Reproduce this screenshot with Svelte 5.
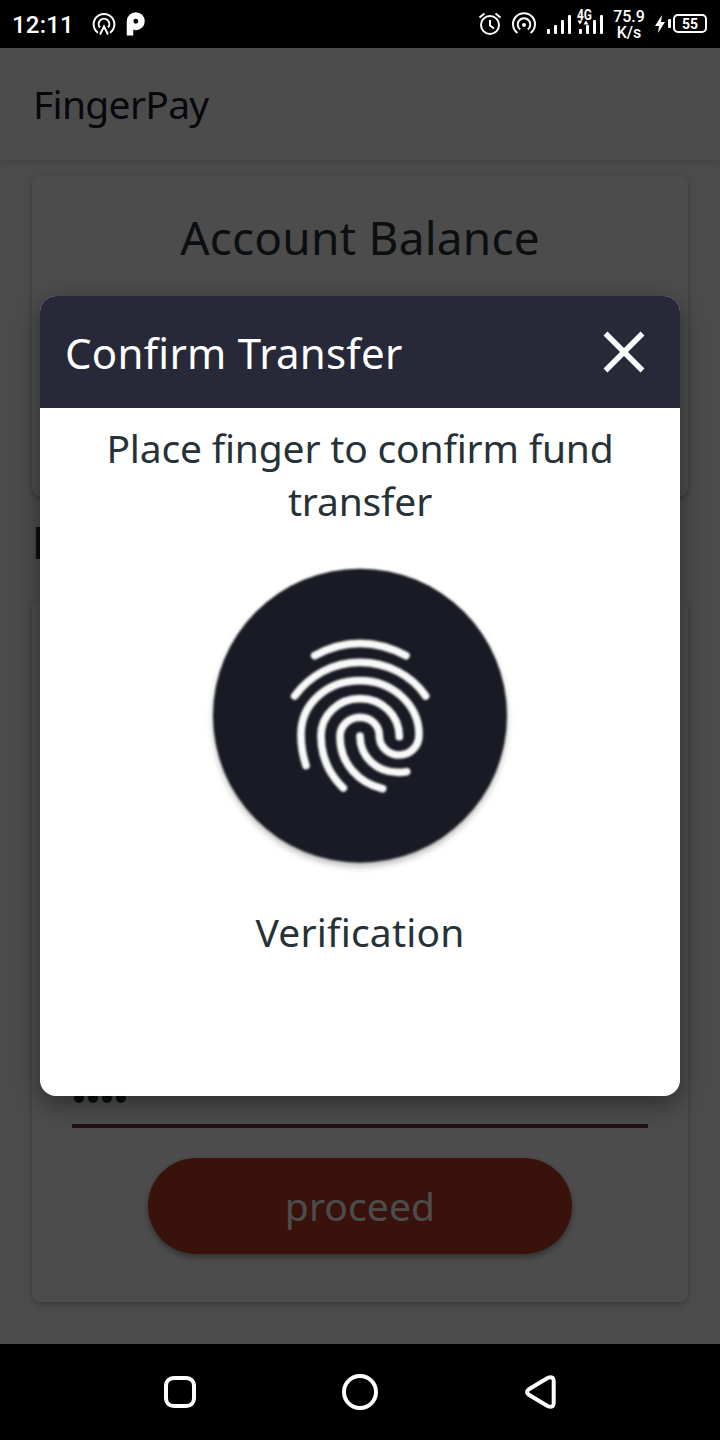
<script lang="ts">
  let open = $state(true);
  const pin = [1, 2, 3, 4];
  const bars = [5, 9, 14, 19];
</script>

{#snippet signal(network: boolean)}
  <svg class="signal" class:network viewBox="0 0 28 30" width="28" height="30">
    {#each bars as height, i}
      <rect x={i * 7} y={25 - height} width="3" {height} rx="1" />
    {/each}
    {#if network}
      <rect class="gap" x="-2" y="0" width="16" height="15" />
      <path d="M-1.500 11.500h5l-2.500 4zM4.500 15.500h5l-2.500-4z" />
      <text x="-2" y="10.500" textLength="15" lengthAdjust="spacingAndGlyphs">4G</text>
    {/if}
  </svg>
{/snippet}

<div class="screen">
  <header class="status-bar">
    <span class="clock">12:11</span>
    <svg class="podcast" viewBox="0 0 24 24" width="24" height="24">
      <path d="M6 20.800A10.400 10.400 0 1 1 18 20.800" />
      <path d="M8 15.500A5.300 5.300 0 1 1 16 15.500" />
      <path d="M8 22.500l4-8 4 8" />
    </svg>
    <svg class="pay" viewBox="0 0 19 24" width="19" height="24">
      <circle cx="9.800" cy="9.200" r="5.700" />
      <path d="M4 9v14.500" />
    </svg>
    <div class="status-right">
      <svg class="alarm" viewBox="0 0 24 24" width="24" height="24">
        <circle cx="12" cy="13" r="9" />
        <path d="M12 8v5.500l4 3M1.500 5.500l5-4M22.500 5.500l-5-4" />
      </svg>
      <svg class="hotspot" viewBox="0 0 24 24" width="24" height="24">
        <path d="M5.500 21A11 11 0 1 1 18.500 21" />
        <path d="M8.200 17.500A6.300 6.300 0 1 1 15.800 17.500" />
        <circle cx="12" cy="13" r="1" />
      </svg>
      {@render signal(false)}
      {@render signal(true)}
      <div class="speed"><span>75.9</span><span>K/s</span></div>
      <svg class="battery" viewBox="0 0 54 24" width="54" height="24">
        <path class="fill" d="M7 3L0 14h4l-1 7 7-11H6z" />
        <rect class="fill" x="13" y="7" width="3" height="9" rx="1" />
        <rect class="case" x="19" y="3" width="32" height="17" rx="4" />
        <text x="35" y="16.500">55</text>
      </svg>
    </div>
  </header>

  <main class="app">
    <div class="app-bar"><h1>FingerPay</h1></div>
    <section class="card balance"><h2>Account Balance</h2></section>
    <h3 class="section-title">F</h3>
    <section class="card form">
      <div class="pin">
        {#each pin as _}
          <i></i>
        {/each}
      </div>
      <button class="proceed"><span>proceed</span></button>
    </section>

    {#if open}
      <div class="backdrop">
        <div class="modal" role="dialog" aria-modal="true">
          <div class="modal-header">
            <h2>Confirm Transfer</h2>
            <button aria-label="Close" onclick={() => (open = false)}>
              <svg viewBox="0 0 40 40" width="40" height="40">
                <path d="M1.500 1.500l37 37M38.500 1.500l-37 37" />
              </svg>
            </button>
          </div>
          <div class="modal-body">
            <p class="prompt">Place finger to confirm fund<br />transfer</p>
            <svg class="fingerprint" viewBox="0 0 960 960" width="320" height="320">
              <circle cx="480" cy="467" r="441" />
              <path d="M344 287Q410 250 480 250T618 287" />
              <path d="M284 408C330 345 400 307 480 307S635 345 677 408" />
              <path
                d="M318 617C303 570 303 545 303 524C303 430 382 362 480 362C578 362 657 435 657 524C657 560 630 585 598 585C565 585 538 560 538 527C538 495 512 472 480 472C447 472 420 497 420 530C420 610 475 668 548 686"
              />
              <path d="M430 684C390 645 363 590 363 527C363 465 415 416 480 416C545 416 598 465 598 530" />
              <path d="M480 528C480 590 530 637 595 637Q612 637 620 635" />
            </svg>
            <p class="verify">Verification</p>
          </div>
        </div>
      </div>
    {/if}
  </main>

  <nav class="nav-bar">
    <svg viewBox="0 0 40 40" width="40" height="40">
      <rect x="6" y="6" width="28" height="28" rx="7.500" />
    </svg>
    <svg viewBox="0 0 40 40" width="40" height="40">
      <circle cx="20" cy="20" r="16" />
    </svg>
    <svg viewBox="0 0 40 40" width="40" height="40">
      <path d="M8.500 17.500L27.500 6Q33.500 3.500 33.700 9V31Q33.500 36.500 27.500 34L8.500 22.500Q5.500 20 8.500 17.500Z" />
    </svg>
  </nav>
</div>

<style>
  :global(body) {
    margin: 0;
    background: #000;
  }

  .screen {
    width: 720px;
    height: 1440px;
    display: flex;
    flex-direction: column;
    font-family: "Noto Sans", "Open Sans", sans-serif;
    overflow: hidden;
  }

  h1,
  h2,
  h3,
  p {
    margin: 0;
    font-weight: 400;
  }

  button {
    border: none;
    padding: 0;
    font: inherit;
  }

  svg {
    display: block;
    flex: none;
    overflow: visible;
  }

  .status-bar {
    box-sizing: border-box;
    height: 48px;
    padding: 0 11px 0 12px;
    display: flex;
    align-items: center;
    background: #000;
    color: #fff;
    font-family: Roboto, sans-serif;

    & svg {
      fill: none;
      stroke: #fff;
      stroke-width: 2;
    }
  }

  .clock {
    width: 80px;
    padding-top: 1px;
    font-size: 24px;
    font-weight: 500;
    letter-spacing: 0.2px;
  }

  .status-bar .pay {
    margin-left: 10px;
    stroke-width: 6.500;
  }

  .status-right {
    margin-left: auto;
    display: flex;
    align-items: center;
  }

  .alarm {
    margin-right: 10px;
  }

  .hotspot {
    margin-right: 11px;

    & circle {
      fill: #fff;
    }
  }

  .status-bar .signal {
    fill: #fff;
    stroke: none;
    margin-right: 4px;

    &.network {
      margin-right: 5px;
    }

    & .gap {
      fill: #000;
    }

    & text {
      font: 700 14px Roboto, sans-serif;
    }
  }

  .speed {
    width: 34px;
    margin-right: 9px;
    padding-top: 2px;
    display: flex;
    flex-direction: column;
    align-items: center;
    font-size: 16px;
    font-weight: 500;
    line-height: 16px;
  }

  .battery {
    & .fill {
      fill: #fff;
      stroke: none;
    }

    & text {
      font: 700 14px Roboto, sans-serif;
      fill: #fff;
      stroke: none;
      text-anchor: middle;
    }
  }

  .app {
    position: relative;
    height: 1296px;
    background: #fafafa;
  }

  .app-bar {
    box-sizing: border-box;
    height: 112px;
    padding: 0 0 2px 33px;
    display: flex;
    align-items: center;
    background: #fff;
    box-shadow: 0 2px 6px #0002;

    & h1 {
      font-size: 39px;
      color: #18182a;
      letter-spacing: -0.7px;
    }
  }

  .card {
    box-sizing: border-box;
    margin: 0 32px;
    border-radius: 8px;
    background: #fff;
    box-shadow: 0 2px 5px #0004;
  }

  .balance {
    height: 320px;
    margin-top: 16px;
    padding-top: 30px;
    text-align: center;

    & h2 {
      font-size: 46px;
      line-height: 63px;
      color: #263238;
      letter-spacing: 0.2px;
    }
  }

  .section-title {
    height: 104px;
    padding-left: 32px;
    font-size: 44px;
    font-weight: 700;
    line-height: 93px;
    box-sizing: border-box;
    color: #263238;
  }

  .form {
    height: 702px;
    display: flex;
    flex-direction: column;
    align-items: center;
    justify-content: flex-end;
    padding-bottom: 48px;
  }

  .pin {
    box-sizing: border-box;
    width: 576px;
    height: 35px;
    padding-left: 2px;
    display: flex;
    gap: 4px;
    border-bottom: 4px solid #6e3444;

    & i {
      width: 10px;
      height: 10px;
      border-radius: 50%;
      background: #263238;
    }
  }

  .proceed {
    width: 424px;
    height: 96px;
    margin-top: 30px;
    padding-bottom: 2px;
    border-radius: 48px;
    background: #bf3c27;
    color: #fff;
    font-size: 39px;
    box-shadow: 0 3px 6px #0006;

    & span {
      letter-spacing: 0.1px;
    }
  }

  .backdrop {
    position: absolute;
    inset: 0;
    display: grid;
    place-items: center;
    background: #000000b3;
  }

  .modal {
    width: 640px;
    height: 800px;
    border-radius: 16px;
    background: #fff;
    box-shadow: 0 8px 24px #0006;
    overflow: hidden;
  }

  .modal-header {
    box-sizing: border-box;
    height: 112px;
    padding: 0 36px 0 25px;
    display: flex;
    align-items: center;
    justify-content: space-between;
    background: #272938;
    color: #fff;

    & h2 {
      font-size: 42px;
      letter-spacing: 0.25px;
    }

    & button {
      background: none;
    }

    & path {
      stroke: #fff;
      stroke-width: 5.500;
    }
  }

  .modal-body {
    padding-top: 13px;
    display: flex;
    flex-direction: column;
    align-items: center;
    text-align: center;

    & p {
      font-size: 39px;
      line-height: 53px;
      color: #263238;
    }

    & .prompt {
      letter-spacing: -0.18px;
    }
  }

  .fingerprint {
    margin-top: 33px;
    fill: none;
    stroke: #f8f8f8;
    stroke-width: 23;
    stroke-linecap: round;
    filter: blur(0.9px) drop-shadow(0 4px 3px #0004);

    & circle {
      fill: #191b24;
      stroke: none;
    }
  }

  .modal-body .verify {
    margin-top: 25px;
    letter-spacing: 0.2px;
  }

  .nav-bar {
    height: 96px;
    padding: 0 160px;
    display: flex;
    align-items: center;
    justify-content: space-between;
    background: #000;

    & svg {
      fill: none;
      stroke: #fff;
      stroke-width: 4;
    }
  }
</style>
